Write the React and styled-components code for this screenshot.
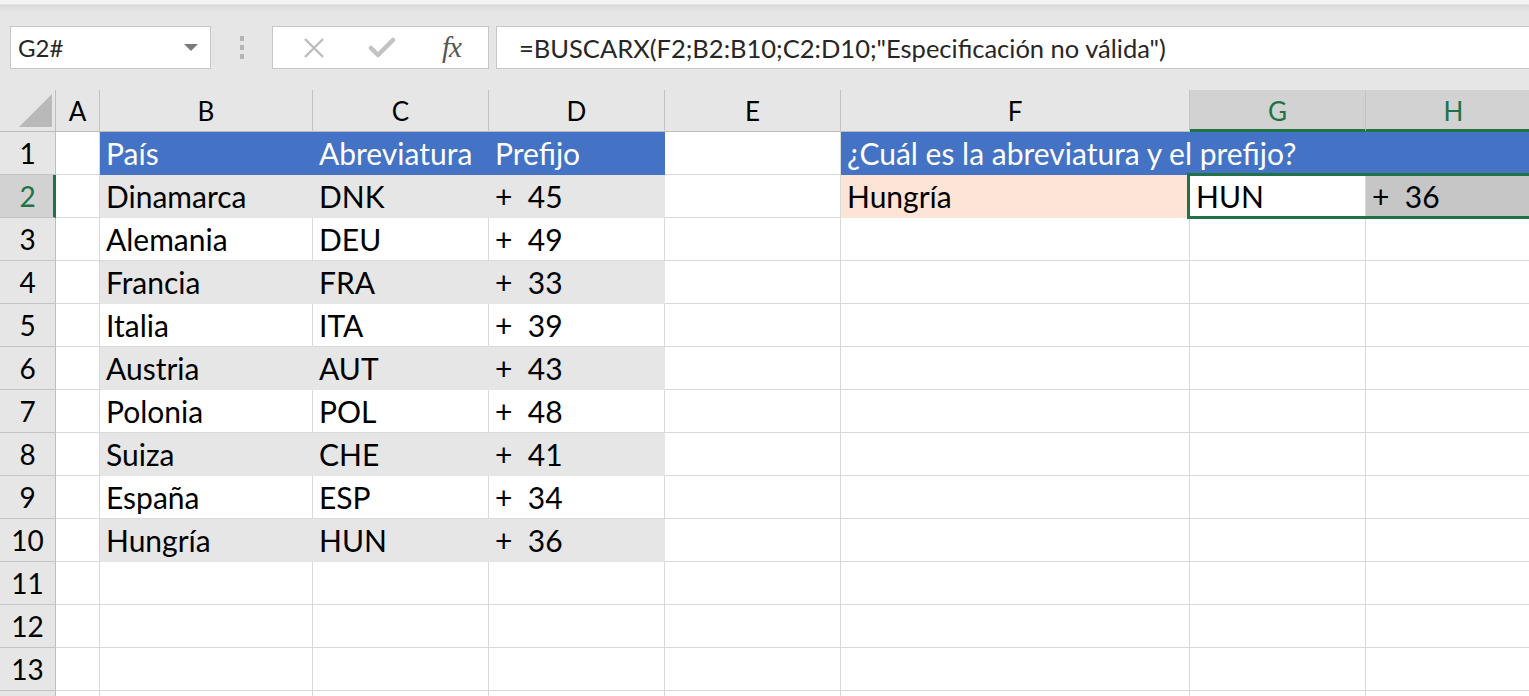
import React from "react";
import styled, { createGlobalStyle } from "styled-components";

// grid geometry taken from the sheet
const COLS = [
  { key: "A", width: 44 },
  { key: "B", width: 213 },
  { key: "C", width: 176 },
  { key: "D", width: 176 },
  { key: "E", width: 176 },
  { key: "F", width: 349 },
  { key: "G", width: 176, selected: true },
  { key: "H", width: 176, selected: true },
];

const countries = [
  ["Dinamarca", "DNK", "45"],
  ["Alemania", "DEU", "49"],
  ["Francia", "FRA", "33"],
  ["Italia", "ITA", "39"],
  ["Austria", "AUT", "43"],
  ["Polonia", "POL", "48"],
  ["Suiza", "CHE", "41"],
  ["España", "ESP", "34"],
  ["Hungría", "HUN", "36"],
];

const BLUE = "#4472c4";
const BAND = "#e7e6e6";
const PEACH = "#fce4d6";
const GREEN = "#217346";
const GRID = "#d9d9d9";

const GlobalStyle = createGlobalStyle`
  html, body {
    margin: 0;
    padding: 0;
    background: #ffffff;
    overflow: hidden;
  }
  body {
    font-family: Lato, "Liberation Sans", sans-serif;
  }
`;

const Page = styled.div`
  width: 1529px;
  height: 696px;
  overflow: hidden;
  background: #ffffff;
`;

const Toolbar = styled.div`
  height: 90px;
  box-sizing: border-box;
  background: linear-gradient(#f3f3f3 0, #f3f3f3 4px, #d9d9d9 5px, #e6e6e6 12px, #e6e6e6 100%);
  display: flex;
  align-items: flex-start;
  padding: 26px 0 0 10px;
`;

const NameBox = styled.div`
  width: 201px;
  height: 43px;
  box-sizing: border-box;
  background: #fff;
  border: 1px solid #c6c6c6;
  display: flex;
  align-items: center;
  justify-content: space-between;
  padding: 0 12px 0 7px;
  font-size: 24px;
  color: #262626;
`;

const Caret = styled.span`
  width: 0;
  height: 0;
  border-left: 7px solid transparent;
  border-right: 7px solid transparent;
  border-top: 7px solid #7a7a7a;
`;

const Grip = styled.div`
  width: 61px;
  height: 43px;
  display: flex;
  flex-direction: column;
  align-items: center;
  justify-content: center;
  gap: 4px;
  span {
    width: 4px;
    height: 5px;
    background: #b4b4b4;
  }
`;

const ButtonBox = styled.div`
  width: 217px;
  height: 43px;
  box-sizing: border-box;
  background: #fff;
  border: 1px solid #c6c6c6;
  display: flex;
  align-items: center;
  justify-content: space-around;
  padding: 0 6px 0 8px;
`;

const Fx = styled.span`
  font-family: "Liberation Serif", "DejaVu Serif", serif;
  font-style: italic;
  font-size: 29px;
  color: #555;
  letter-spacing: -1px;
  margin-left: 4px;
`;

const FormulaInput = styled.div`
  flex: 1;
  margin-left: 7px;
  height: 43px;
  box-sizing: border-box;
  background: #fff;
  border: 1px solid #c6c6c6;
  border-right: none;
  display: flex;
  align-items: center;
  padding-left: 22px;
  font-size: 25.5px;
  color: #262626;
  white-space: nowrap;
`;

const Sheet = styled.div`
  position: relative;
  display: grid;
  grid-template-columns: 56px ${COLS.map((c) => `${c.width}px`).join(" ")} 1fr;
  grid-template-rows: 42px repeat(14, 43px);
`;

const Corner = styled.div`
  background: #e6e6e6;
  border-right: 1px solid #bdbdbd;
  border-bottom: 1px solid #bdbdbd;
  box-sizing: border-box;
  position: relative;
  &::after {
    content: "";
    position: absolute;
    right: 3px;
    bottom: 4px;
    width: 0;
    height: 0;
    border-left: 33px solid transparent;
    border-bottom: 33px solid #b9b9b9;
  }
`;

const ColHead = styled.div`
  box-sizing: border-box;
  background: ${(p) => (p.$selected ? "#d2d2d2" : "#e6e6e6")};
  color: ${(p) => (p.$selected ? GREEN : "#000")};
  border-right: 1px solid #c4c4c4;
  border-bottom: ${(p) => (p.$selected ? `3px solid ${GREEN}` : "1px solid #bdbdbd")};
  display: flex;
  align-items: center;
  justify-content: center;
  font-size: 26px;
  padding-top: ${(p) => (p.$selected ? "2px" : "0")};
`;

const RowHead = styled.div`
  box-sizing: border-box;
  background: ${(p) => (p.$selected ? "#d2d2d2" : "#e6e6e6")};
  color: ${(p) => (p.$selected ? GREEN : "#000")};
  border-right: ${(p) => (p.$selected ? `3px solid ${GREEN}` : "1px solid #bdbdbd")};
  border-bottom: 1px solid #c4c4c4;
  display: flex;
  align-items: center;
  justify-content: center;
  font-size: 28px;
  padding-left: ${(p) => (p.$selected ? "2px" : "0")};
`;

const Cell = styled.div`
  box-sizing: border-box;
  background: ${(p) => p.$fill || "#fff"};
  color: ${(p) => p.$ink || "#000"};
  border-right: 1px solid ${(p) => p.$fill || GRID};
  border-bottom: 1px solid ${(p) => p.$fill || GRID};
  grid-column: ${(p) => (p.$span ? `span ${p.$span}` : "auto")};
  display: flex;
  align-items: center;
  padding: 0 0 0 6px;
  font-size: 30px;
  white-space: nowrap;
  overflow: hidden;
`;

const Selection = styled.div`
  position: absolute;
  box-sizing: border-box;
  left: 1187px;
  top: 83px;
  right: -10px;
  height: 46px;
  border: 3px solid ${GREEN};
  pointer-events: none;
`;

const Plus = ({ n }) => <>+&nbsp;&nbsp;{n}</>;

const XIcon = () => (
  <svg width="24" height="24" viewBox="0 0 24 24">
    <path d="M3 3 L21 21 M21 3 L3 21" stroke="#bdbdbd" strokeWidth="2.4" fill="none" />
  </svg>
);

const CheckIcon = () => (
  <svg width="28" height="24" viewBox="0 0 28 24">
    <path d="M3 12 L10 19 L25 4" stroke="#c2c2c2" strokeWidth="4.5" fill="none" strokeLinecap="round" strokeLinejoin="round" />
  </svg>
);

const App = () => {
  const blank = (r, from, to) =>
    COLS.slice(from, to).map((c) => <Cell key={`${r}-${c.key}`} />);

  return (
    <Page>
      <GlobalStyle />
      <Toolbar>
        <NameBox>
          G2#
          <Caret />
        </NameBox>
        <Grip>
          <span />
          <span />
          <span />
        </Grip>
        <ButtonBox>
          <XIcon />
          <CheckIcon />
          <Fx>fx</Fx>
        </ButtonBox>
        <FormulaInput>=BUSCARX(F2;B2:B10;C2:D10;"Especificación no válida")</FormulaInput>
      </Toolbar>

      <Sheet>
        <Corner />
        {COLS.map((c) => (
          <ColHead key={c.key} $selected={c.selected}>
            {c.key}
          </ColHead>
        ))}
        <ColHead />

        {/* row 1: table header + question */}
        <RowHead>1</RowHead>
        <Cell />
        <Cell $fill={BLUE} $ink="#fff">País</Cell>
        <Cell $fill={BLUE} $ink="#fff">Abreviatura</Cell>
        <Cell $fill={BLUE} $ink="#fff">Prefijo</Cell>
        <Cell />
        <Cell $fill={BLUE} $ink="#fff" $span={4}>
          ¿Cuál es la abreviatura y el prefijo?
        </Cell>

        {countries.map(([name, abbr, prefix], i) => {
          const row = i + 2;
          const fill = row % 2 === 0 ? BAND : undefined;
          return (
            <React.Fragment key={row}>
              <RowHead $selected={row === 2}>{row}</RowHead>
              <Cell />
              <Cell $fill={fill}>{name}</Cell>
              <Cell $fill={fill}>{abbr}</Cell>
              <Cell $fill={fill}>
                <Plus n={prefix} />
              </Cell>
              <Cell />
              {row === 2 ? (
                <>
                  <Cell $fill={PEACH}>Hungría</Cell>
                  <Cell>HUN</Cell>
                  <Cell $fill="#c6c6c6">
                    <Plus n="36" />
                  </Cell>
                  <Cell $fill="#c6c6c6" />
                </>
              ) : (
                <>
                  {blank(row, 5, 8)}
                  <Cell />
                </>
              )}
            </React.Fragment>
          );
        })}

        {[11, 12, 13].map((row) => (
          <React.Fragment key={row}>
            <RowHead>{row}</RowHead>
            {blank(row, 0, 8)}
            <Cell />
          </React.Fragment>
        ))}

        {/* the next row is only a sliver at the window's bottom edge */}
        <RowHead />
        {blank(14, 0, 8)}
        <Cell />

        <Selection />
      </Sheet>
    </Page>
  );
};

export default App;
